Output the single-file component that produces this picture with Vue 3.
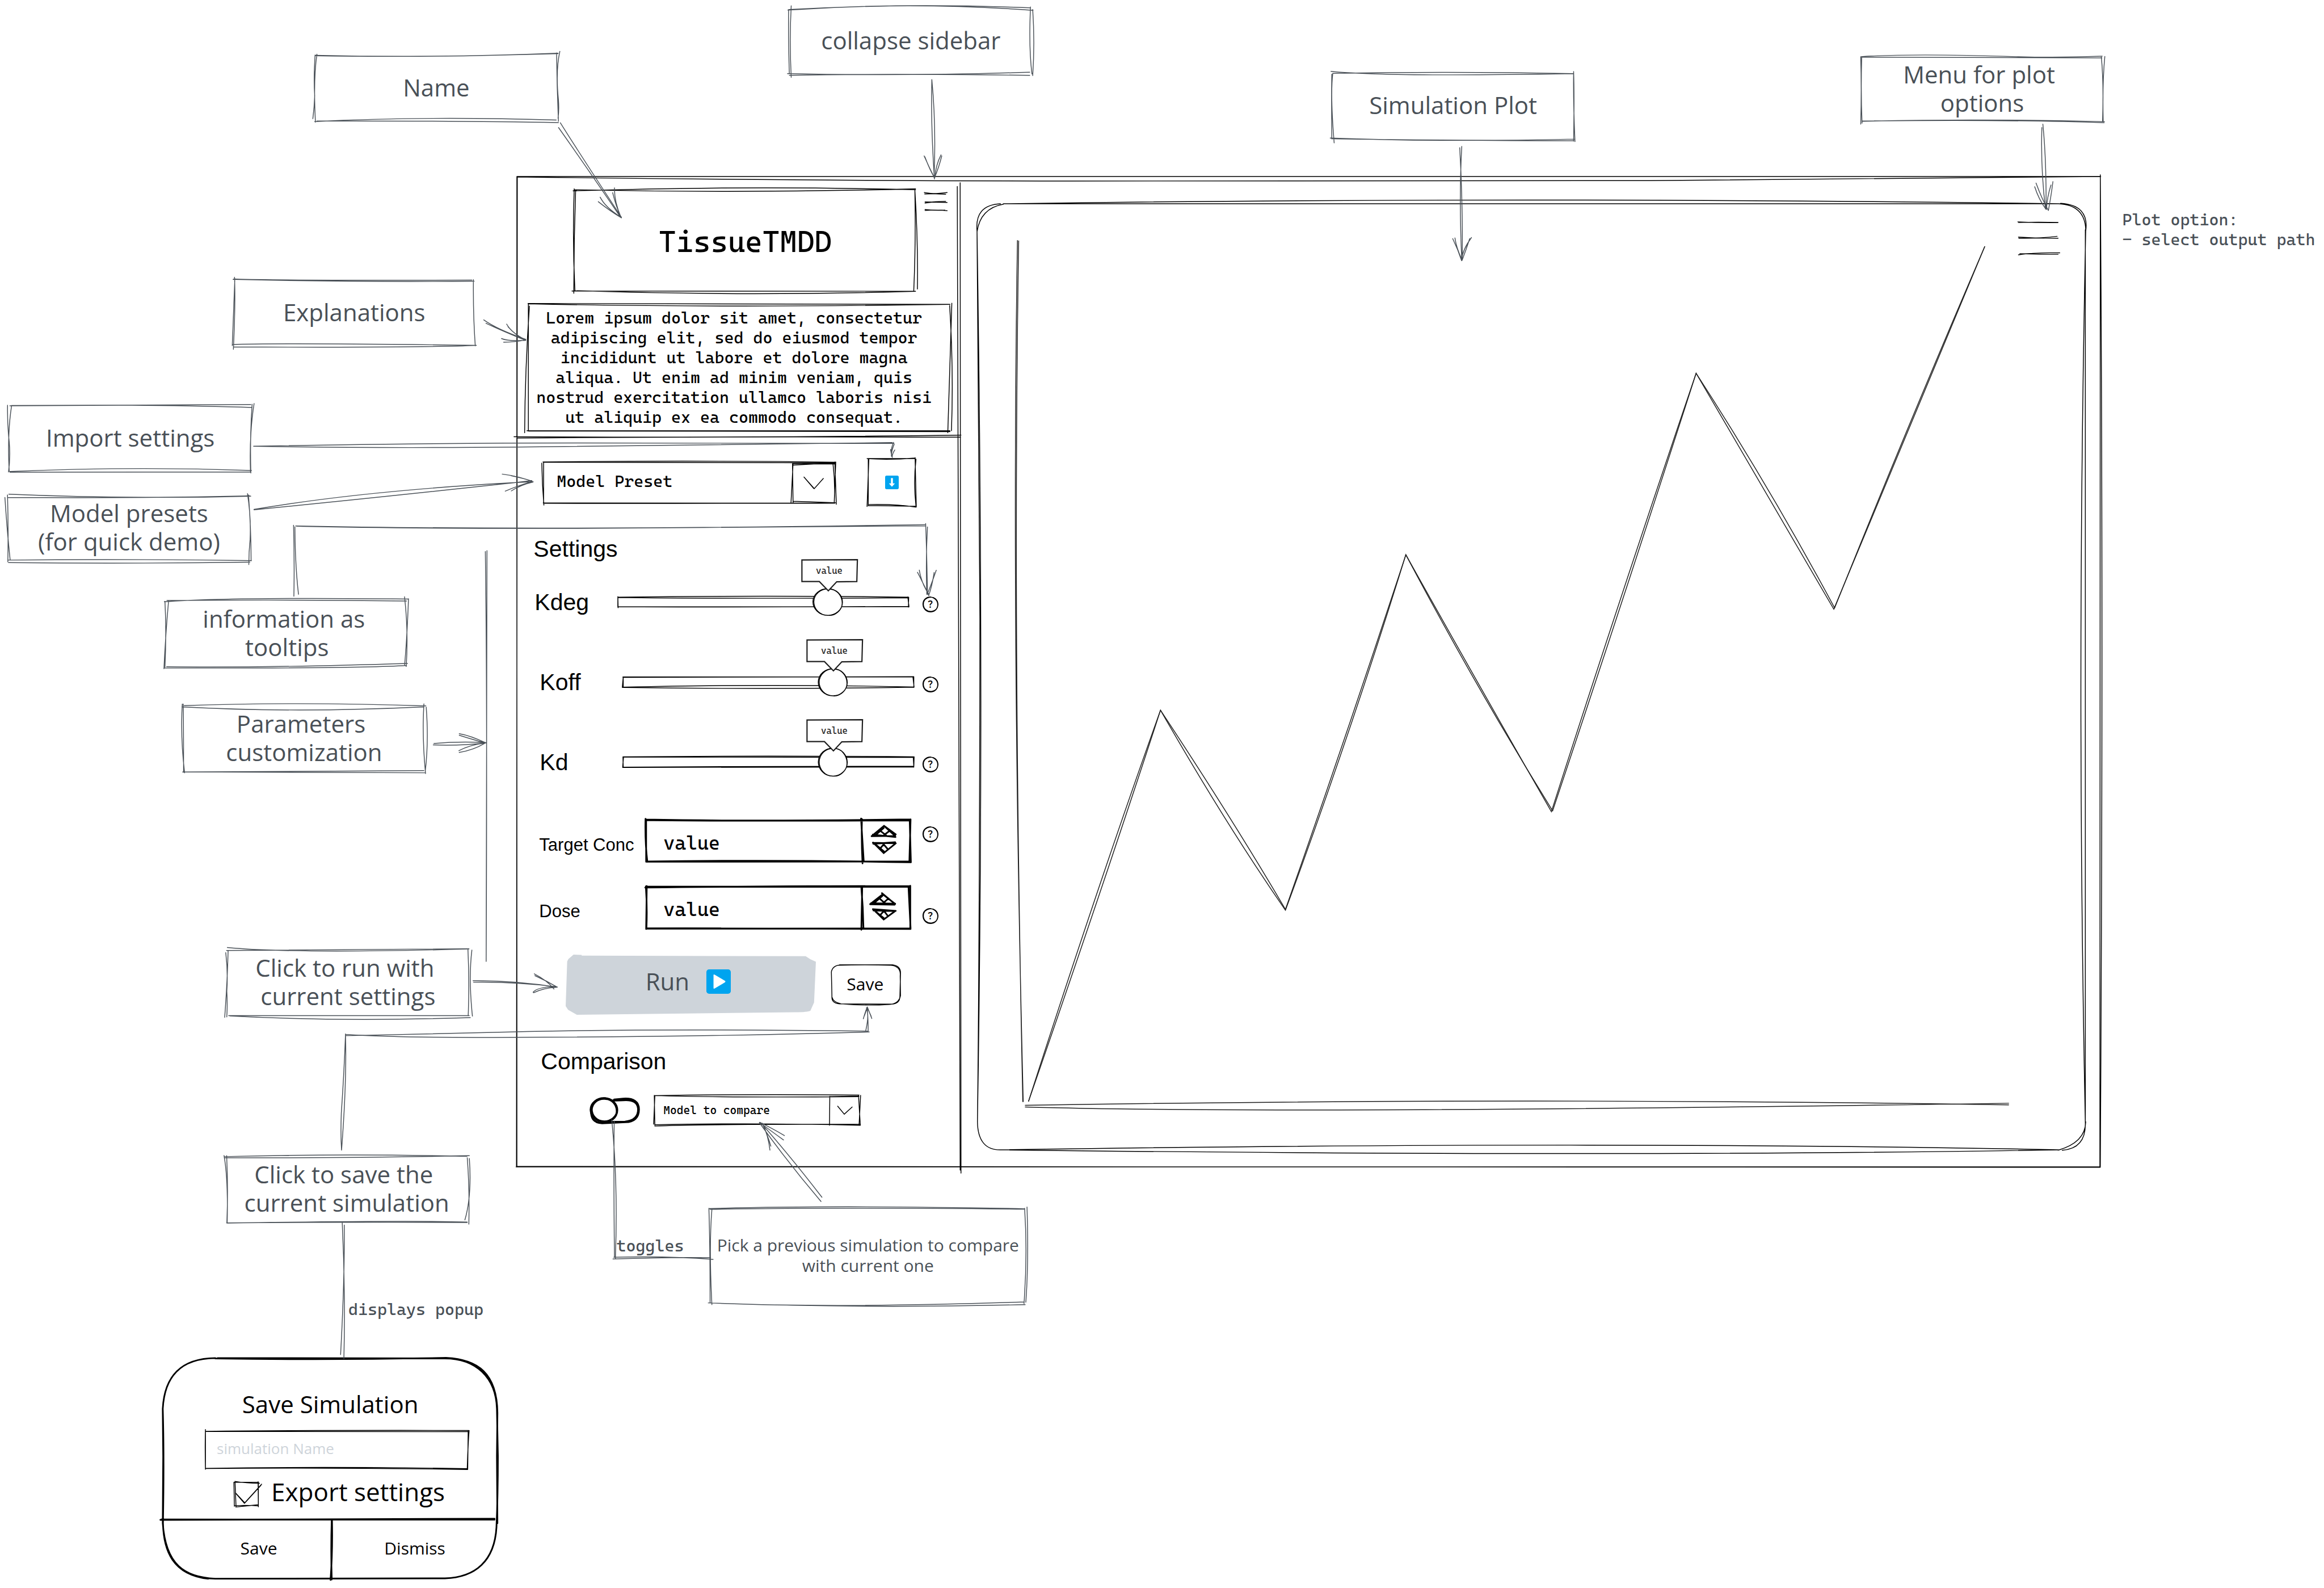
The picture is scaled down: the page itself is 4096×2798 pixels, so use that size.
<script setup>
import { h, ref } from 'vue'

// Every stroke lives on one 5636 x 3850 board. Strokes are noted down on local
// sheets of 1568 x 1568 units; sheet() maps a sheet onto its part of the board.
const BOARD = { w: 5636, h: 3850 }
const sheet = (x, y, w, h2) => (d) =>
  d.replace(/(-?[\d.]+) (-?[\d.]+)/g, (m, a, b) =>
    `${Math.round((x + (a * w) / 1568) * 10) / 10} ${Math.round((y + (b * h2) / 1568) * 10) / 10}`)

const north = sheet(0, 0, 1400, 1000)
const head = sheet(1200, 0, 1400, 1080)
const west = sheet(0, 950, 1250, 950)
const sliderSheet = sheet(1240, 1040, 1150, 850)
const form = sheet(1240, 1880, 1150, 1000)
const runSheet = sheet(350, 2240, 1000, 800)
const popupSheet = sheet(350, 3100, 900, 750)
const compareSheet = sheet(1400, 2600, 1150, 600)
const east = sheet(4400, 100, 1236, 800)
const plotSheet = sheet(2300, 400, 1700, 1400)
const topSheet = sheet(3150, 130, 750, 523)

const blob = (cx, cy, rx, ry) => {
  const ring = (x, y, a, b, s) =>
    `M${x - a} ${y}C${x - a} ${y - b * 0.6} ${x - a * 0.5} ${y - b - s} ${x + s} ${y - b}C${x + a * 0.6} ${y - b} ${x + a} ${y - b * 0.5} ${x + a} ${y + s}C${x + a} ${y + b * 0.6} ${x + a * 0.5} ${y + b + s} ${x} ${y + b}C${x - a * 0.6} ${y + b} ${x - a} ${y + b * 0.5} ${x - a} ${y - s}`
  return ring(cx, cy, rx, ry, 1) + ring(cx + 1, cy + 1, rx - 2, ry - 1, 4)
}

const Sketch = (props) =>
  h('svg', {
    class: 'sketch',
    viewBox: props.box.join(' '),
    preserveAspectRatio: 'none',
    'aria-hidden': 'true',
    fill: 'none',
    stroke: 'currentColor',
    'stroke-width': props.weight || 2,
    'stroke-linecap': 'round',
  }, [
    h('path', { d: props.d }),
    props.top ? h('path', { d: props.top, fill: '#fff' }) : null,
  ])
Sketch.props = ['box', 'd', 'top', 'weight']

const place = (b) => ({
  left: `${(b[0] / BOARD.w) * 100}%`,
  top: `${(b[1] / BOARD.h) * 100}%`,
  width: `${(b[2] / BOARD.w) * 100}%`,
  height: b[3] ? `${(b[3] / BOARD.h) * 100}%` : undefined,
})

const callouts = [
  { text: 'Name', box: [763, 134, 590, 161], d: north('M856 211Q1180 222 1515 203M857 213Q1150 220 1515 205M1511 202Q1512 330 1516 462M1520 196Q1508 270 1516 380Q1518 420 1515 450M854 463Q1150 442 1510 457M860 461Q1250 460 1516 467M860 207Q850 300 856 465M855 210Q851 300 854 365Q853 410 849 452') },
  { text: 'Explanations', box: [567, 679, 584, 161], d: north('M633 1063Q960 1074 1288 1070M635 1062Q800 1068 1282 1066M1286 1064Q1285 1200 1291 1316M631 1311Q750 1304 1294 1314M634 1320Q1150 1323 1294 1314M637 1055Q640 1150 634 1329M638 1060Q634 1200 631 1315') },
  { text: 'collapse sidebar', box: [1914, 19, 590, 162], d: head('M800 33Q1120 10 1453 27M796 35Q1130 5 1462 36M1455 24Q1450 170 1459 260M1461 33Q1467 150 1461 266M795 259Q1120 268 1453 254M800 265Q1050 258 1453 265M805 20Q800 140 805 272M798 33Q797 140 800 260') },
  { text: 'Simulation Plot', box: [3230, 177, 588, 160], d: topSheet('M173 142Q780 126 1392 144M164 127Q440 168 1392 144M1394 129Q1398 300 1394 635M1394 135Q1392 350 1401 638M160 612Q700 642 1400 620M166 618Q900 632 1396 632M168 148Q166 300 168 615M173 143Q160 300 180 647') },
  { text: 'Menu for plot \noptions', box: [4514, 138, 586, 158], d: east('M142 74Q300 58 620 74Q750 80 885 72M146 76Q500 77 884 80M882 73Q890 200 886 380M893 73Q885 200 888 382M147 381Q500 368 892 383M147 380Q600 372 891 388M142 74Q145 230 142 395M145 74Q142 240 146 390') },
  { text: 'Import settings', box: [22, 984, 588, 160], d: west('M30 56Q400 52 763 51M35 55Q500 50 767 63M767 50Q760 180 763 325M773 47Q758 170 762 320M30 319Q400 298 765 315M30 322L763 321M23 54Q22 130 28 200Q32 260 26 321M35 58Q22 170 28 318') },
  { text: 'Model presets\n(for quick demo)', box: [18, 1201, 590, 161], d: west('M27 409Q400 430 763 417M24 422Q400 426 760 416M753 407Q764 500 761 590Q757 640 757 691M756 412Q764 550 764 676M24 673Q380 668 765 675M26 683Q400 688 760 681M23 412Q26 540 24 680M15 422Q22 560 31 672') },
  { text: 'information as \ntooltips', box: [402, 1455, 588, 163], d: west('M500 841Q700 822 1243 830M508 836Q900 832 1237 838M1231 821Q1243 960 1236 1100M1243 829Q1238 1000 1231 1096M499 1106Q1100 1108 1237 1096M507 1101Q800 1106 1240 1088M502 839Q507 960 502 1103M513 838Q504 970 499 1109') },
  { text: 'Parameters \ncustomization', box: [444, 1712, 587, 160], d: west('M560 1256Q900 1240 1295 1257M553 1261Q900 1286 1289 1261M1289 1249Q1283 1380 1294 1528M1296 1262Q1304 1400 1293 1520M555 1522Q900 1520 1289 1516M560 1521Q900 1523 1293 1525M554 1250Q548 1380 561 1525M557 1250Q558 1380 558 1523') },
  { text: 'Click to run with \ncurrent settings', box: [550, 2302, 588, 162], d: runSheet('M315 112Q560 142 1234 119M312 126Q600 122 1234 118M1230 120Q1236 280 1231 433M1245 124Q1232 260 1247 438M320 436Q750 438 1235 436M325 437Q750 466 1239 445M309 136Q318 230 313 320Q316 380 313 442M318 128Q315 280 305 444') },
  { text: 'Click to save the \ncurrent simulation', box: [547, 2804, 588, 160], d: runSheet('M304 1105Q770 1090 1226 1104M303 1111Q770 1112 1235 1101M1227 1111Q1236 1250 1233 1426M1235 1114Q1245 1290 1218 1406M312 1420Q800 1416 1227 1418M313 1421Q1000 1408 1227 1416M312 1101Q318 1250 313 1420M302 1100Q318 1210 314 1420') },
  { text: 'Pick a previous simulation to compare\nwith current one', small: true, box: [1722, 2929, 766, 234], d: compareSheet('M438 862Q860 838 1480 863M440 866Q860 852 1480 865M1480 860Q1490 1150 1478 1464M1488 852Q1494 1200 1484 1455M434 1459Q850 1494 1478 1453M436 1459Q950 1496 1482 1470M446 866Q436 1100 446 1470M436 860Q440 1100 440 1458') },
]

const notes = [
  { text: 'Plot option:\n- select output path', box: [5147, 509, 489] },
  { text: 'toggles', box: [1495, 2997, 200] },
  { text: 'displays popup', box: [845, 3151, 360] },
]

const connectors = [
  head('M178 432Q230 540 344 765M173 449Q250 590 340 762M281 710Q310 740 344 767M286 694Q300 730 342 764M325 661Q324 710 343 766M320 678Q330 730 342 762'),
  head('M1187 280Q1184 440 1194 630M1187 280Q1199 440 1193 625M1166 549Q1180 590 1194 626M1168 552Q1182 600 1194 625M1212 545Q1198 580 1195 625M1214 549Q1206 590 1194 626'),
  north('M1314 1216Q1350 1252 1428 1290M1320 1229Q1370 1262 1428 1294M1376 1232Q1390 1266 1428 1292M1380 1242Q1400 1275 1428 1292M1362 1287Q1380 1298 1427 1294M1368 1301Q1400 1300 1428 1292'),
  'M615 1082Q1000 1074 1400 1074L2168 1075M615 1082Q900 1087 1250 1084L2164 1073',
  sliderSheet('M1264 60Q1252 95 1260 127M1266 68Q1256 100 1257 122M1254 92Q1256 110 1259 125M1268 94Q1260 110 1259 125'),
  'M616 1235Q880 1190 1250 1170L1293 1168M616 1236Q900 1208 1250 1170L1290 1165',
  sliderSheet('M-30 202Q30 212 72 237M0 209Q40 220 68 233M0 277Q30 250 72 237M-20 278Q20 255 68 235'),
  west('M894 818Q896 680 893 534M908 810Q898 700 897 540'),
  'M719 1276Q1000 1282 1400 1281L2245 1275M717 1275Q1300 1287 2243 1272',
  sliderSheet('M1370 423Q1374 560 1376 740M1376 438Q1370 580 1374 740M1343 641Q1362 690 1381 745M1349 631Q1356 690 1380 738M1405 632Q1390 690 1376 738M1398 642Q1392 700 1380 745'),
  west('M1318 1413Q1400 1417 1478 1405M1320 1407Q1400 1398 1478 1404M1397 1368Q1430 1375 1478 1405M1397 1374Q1440 1392 1476 1405M1396 1436Q1430 1412 1478 1405M1397 1443Q1440 1434 1474 1407'),
  'M1177 1337Q1182 1700 1179 2331M1181 1335Q1180 1900 1179 2328',
  runSheet('M1250 270Q1400 268 1568 300M1252 277Q1400 274 1566 298'),
  form('M76 754Q120 780 141 812M78 761Q115 780 152 805M72 824Q90 802 152 804M74 826Q105 808 150 805'),
  runSheet('M765 523Q760 700 749 900Q746 1000 750 1075M765 530Q770 750 750 1075'),
  'M838 2511Q1000 2508 1240 2502Q1600 2493 2104 2500M838 2508Q1000 2517 1240 2515Q1700 2514 2108 2502',
  form('M1180 972Q1180 930 1177 880M1172 970Q1184 910 1174 884M1164 925Q1170 900 1177 880M1167 915Q1172 900 1177 882M1192 924Q1186 905 1177 880M1190 916Q1184 900 1177 882'),
  'M830 2965Q838 3130 834 3294M835 2970Q836 3100 826 3284',
  compareSheet('M114 300Q135 700 126 1180M122 308Q120 700 123 1172M118 1182Q300 1170 441 1174M121 1171Q300 1162 449 1185'),
  compareSheet('M806 818Q700 580 602 318M809 791Q700 520 606 318M637 492Q632 400 612 322M640 467Q630 400 612 325M685 400Q640 350 603 316M682 428Q640 370 605 320'),
  'M3545 355Q3538 480 3545 632M3540 358Q3548 500 3546 630',
  plotSheet('M1128 200Q1140 230 1148 260M1133 198Q1136 225 1149 258M1170 197Q1150 230 1148 258M1166 200Q1158 230 1149 259'),
  east('M700 410Q696 600 711 797M703 394Q714 560 713 797M682 674Q700 750 720 804M678 691Q690 750 712 797M734 667Q728 740 720 804M728 683Q716 740 714 800'),
].join('')

const app = {
  box: [1254, 428, 3840, 0],
  frame: [1254, 428, 3840, 2401],
  d: 'M1254 428L5095 428M1254 429Q1900 438 2600 439Q3200 441 4000 438Q4600 434 5094 428M1254 428L1254 2829M1255 428L1253 2829M5094 428Q5102 1500 5094 2829M5094 424Q5098 1500 5093 2830M1252 2829L5094 2829M1254 2828L5094 2830M2322 452Q2326 1500 2329 2837M2329 443Q2331 1500 2331 2844M1247 1059Q1800 1062 2331 1055M1255 1062Q1700 1058 2330 1060',
}

const art = {
  title: { box: [1392, 459, 829, 246], d: head('M212 671Q680 652 1143 667M215 667Q680 680 1143 664M1141 665Q1144 850 1138 1023M1141 667Q1150 850 1148 1016M209 1023Q800 1024 1143 1024M215 1022Q680 1042 1143 1024M215 664Q210 850 217 1022M219 668Q214 850 214 1031') },
  collapse: { box: [2241, 466, 55, 44], d: head('M1166 677Q1185 682 1224 683M1167 682Q1200 681 1228 677M1168 714Q1195 708 1224 708M1168 710L1228 712M1168 737Q1195 741 1222 739M1168 740Q1200 737 1228 741') },
  intro: { box: [1281, 736, 1024, 309], d: head('M90 1068Q660 1067 1236 1071M92 1069Q600 1084 1236 1071M1241 1067Q1236 1300 1230 1522M1235 1075Q1246 1300 1240 1515M87 1515L1236 1515M92 1516L1236 1518M94 1077Q82 1300 81 1522M91 1068L91 1516') },
  preset: { box: [1317, 1117, 710, 101], weight: 2, d: sliderSheet('M105 142Q600 134 1073 143M106 143L1073 146M1073 142L1068 325M1070 142L1075 332M106 326L1070 328M106 328Q600 330 1072 325M101 147Q102 240 108 336M107 142L107 328M932 147L925 328M930 150L932 327M933 156Q1000 150 1070 149M930 149L1070 151M1064 152Q1072 240 1068 325M932 319L1068 325M968 210L1002 262L1032 216M970 213L1000 261') },
  download: { box: [2105, 1112, 115, 115], weight: 2, d: sliderSheet('M1176 133Q1250 140 1335 130M1180 133L1334 132M1334 129L1338 348M1337 135Q1328 240 1337 346M1180 342L1337 345M1180 337Q1270 334 1337 349M1182 133L1176 346M1180 133L1180 343') },
  bubble: { box: [1945, 1358, 136, 75], weight: 3, d: '', top: sliderSheet('M962 588L1147 587L1145 684L1078 685L1050 725L1020 684L962 684Z') },
  help: { box: [0, 0, 40, 40], d: 'M20 1C8 1 0 10 1 21C2 32 10 39 21 39C32 38 39 30 39 19C38 8 30 0 18 2M6 8C1 14 0 26 8 33C16 40 30 38 35 31C41 22 38 9 28 4C22 0 12 2 7 7' },
  save: { box: [2017, 2338, 166, 96], d: form('M1085 718L1260 718Q1286 722 1286 748L1284 838Q1284 866 1255 867L1085 866Q1058 864 1060 838L1058 745Q1062 720 1090 718M1080 720Q1170 716 1255 720Q1288 724 1285 760L1286 835Q1280 866 1250 868Q1170 874 1090 866Q1064 860 1060 840') },
  toggle: { box: [1432, 2659, 119, 63], weight: 5, d: form('M340 1231L370 1228C405 1225 422 1240 422 1268C422 1300 405 1316 378 1316L300 1320C270 1318 263 1300 263 1270C263 1245 280 1228 310 1226M330 1235L368 1233C404 1229 419 1244 420 1266C421 1296 404 1312 376 1315L300 1316'), top: form(blob(306, 1270, 44, 44)) },
  compare: { box: [1586, 2655, 500, 71], d: form('M472 1216Q800 1210 1150 1214M472 1216Q700 1224 1150 1220M1155 1215L1150 1326M1148 1216L1154 1328M474 1326Q800 1318 1154 1328M474 1331Q600 1324 1154 1324M472 1215L474 1328M474 1217L470 1324M1053 1219L1052 1328M1052 1220L1148 1218M1079 1256L1101 1286L1127 1259') },
  plotFrame: { box: [2368, 494, 2688, 2294], d: 'M2368 560Q2374 1400 2375 1500Q2374 2300 2369 2720M2368 560Q2386 1700 2369 2720M2432 494L4991 494M2432 494Q3700 476 4991 494M5057 557Q5034 1650 5056 2722M5056 557L5056 2722M2427 2788Q3900 2765 4994 2788M2427 2788Q3900 2806 4994 2788M2368 560Q2362 497 2425 494M2368 562Q2376 505 2432 495M4991 494Q5055 497 5057 557M4996 493Q5066 497 5057 560M5056 2722Q5058 2785 5000 2789M5057 2720Q5056 2770 4990 2789M2369 2720Q2370 2790 2427 2788' },
  plotMenu: { box: [4893, 538, 101, 80], d: east('M626 858Q690 863 748 862M628 861Q690 858 749 861M628 931Q690 938 749 936M629 936Q690 938 746 927M628 1015Q680 1003 754 1006M632 1010Q690 1012 749 1013') },
  popup: { box: [395, 3293, 812, 535], weight: 4, d: popupSheet('M310 403L1270 405C1400 405 1486 500 1490 660L1494 900Q1494 1100 1488 1260C1480 1430 1400 1515 1270 1519L300 1521C170 1515 90 1450 78 1240L80 900L78 660C85 500 150 405 300 403M300 405Q780 414 1275 402C1410 410 1490 480 1492 680L1490 900L1492 1240M78 660Q84 900 79 1240C82 1380 120 1500 270 1521M68 1223L1480 1217M72 1221L1480 1222M792 1223Q788 1380 792 1525M793 1223Q796 1380 787 1527') },
  nameField: { box: [498, 3468, 637, 91], d: popupSheet('M258 772Q750 766 1370 768M258 773L1368 774M1368 770L1366 965M1372 768Q1366 860 1364 960M258 960Q800 950 1366 962M258 961Q800 955 1366 966M258 763Q256 850 258 965M258 770L258 962') },
  check: { box: [568, 3592, 59, 59], d: popupSheet('M382 1026Q430 1036 486 1036M378 1030L482 1031M480 1028L481 1155M481 1030L481 1152M380 1149Q430 1145 481 1150M386 1156Q430 1150 481 1144M378 1030L380 1152M383 1030L387 1156M384 1084L422 1137L495 1040M386 1086L424 1135L492 1046') },
}

const sliders = ref([
  { name: 'Kdeg', value: 72, box: [1499, 1424, 706, 72], d: sliderSheet('M353 752Q850 744 1315 752M353 754Q700 760 1315 755M353 796L1315 795M353 795Q700 798 1313 794M353 750L354 800M353 752L353 797M1312 751L1316 796M1315 752L1314 797'), top: sliderSheet(blob(1047, 774, 49, 60)) },
  { name: 'Koff', value: 72, indent: true, box: [1513, 1618, 706, 72], d: sliderSheet('M372 1109L1334 1109M372 1111Q850 1107 1334 1108M372 1155Q850 1140 1334 1154M372 1156Q850 1166 1334 1155M373 1109L370 1156M373 1110L373 1155M1331 1109L1335 1155M1334 1109L1334 1156'), top: sliderSheet(blob(1066, 1133, 48, 61)) },
  { name: 'Kd', value: 72, indent: true, box: [1510, 1812, 706, 72], d: sliderSheet('M368 1466Q850 1460 1330 1466M368 1467L1330 1469M368 1513Q850 1508 1330 1509M368 1514L1330 1512M370 1466L367 1514M368 1467L369 1513M1328 1466L1330 1512M1331 1466L1330 1513'), top: sliderSheet(blob(1062, 1490, 48, 63)) },
])

const fields = ref([
  { name: 'Target Conc', value: 'value', side: 'high', box: [1566, 1987, 643, 103],
    d: form('M445 168Q800 176 1321 167M446 170Q700 174 1321 171M1321 167L1317 328M1318 168L1322 330M446 327Q900 320 1321 330M447 328L1321 327M444 165Q442 250 450 328M446 167L446 328M1157 164L1166 328M1160 166Q1158 250 1162 334M1192 231L1233 192L1270 230M1196 225L1271 234M1194 231L1268 230M1236 194L1272 224M1206 226L1232 200M1218 208L1240 228M1234 226L1250 212M1196 256L1272 258M1198 260L1270 254M1197 255L1232 295L1272 258M1204 261L1234 290M1232 262L1220 278M1232 262L1244 278') },
  { name: 'Dose', value: 'value', side: 'low', box: [1566, 2147, 643, 103],
    d: form('M443 425Q800 420 1320 419M445 421L1319 422M1320 418L1320 580M1314 420L1321 580M446 579L1321 582M446 581L1320 580M448 419L446 582M445 420Q450 500 447 580M1158 423Q1164 500 1165 578M1161 423L1158 585M1187 488L1229 450L1270 487M1190 484L1270 486M1188 488L1268 490M1226 446L1264 482M1202 482L1228 456M1216 464L1236 484M1232 482L1248 466M1196 507L1272 513M1198 512L1270 514M1198 508L1232 546L1270 514M1204 514L1234 542M1232 514L1220 530M1232 512L1244 530') },
])

const compareOn = ref(false)
const exportSettings = ref(true)
const simulationName = ref('')
</script>

<template>
  <main class="board">
    <article class="app" :style="place(app.box)">
      <Sketch :box="app.frame" :d="app.d" />
      <aside class="sidebar">
        <header class="brand">
          <h1 class="title"><Sketch v-bind="art.title" />TissueTMDD</h1>
          <button class="collapse" type="button" aria-label="Collapse sidebar"><Sketch v-bind="art.collapse" /></button>
        </header>
        <p class="intro">
          <Sketch v-bind="art.intro" />
          Lorem ipsum dolor sit amet, consectetur adipiscing elit, sed do eiusmod tempor incididunt ut labore et dolore magna aliqua. Ut enim ad minim veniam, quis nostrud exercitation ullamco laboris nisi ut aliquip ex ea commodo consequat.
        </p>

        <div class="preset-row">
          <div class="picker preset">
            <select aria-label="Model preset"><option>Model Preset</option></select>
            <Sketch v-bind="art.preset" />
          </div>
          <button class="download" type="button" aria-label="Import settings">
            <Sketch v-bind="art.download" />
            <svg class="icon-small" viewBox="0 0 36 36" aria-hidden="true">
              <rect width="36" height="36" rx="4" fill="#00a4ef" />
              <path d="M16 7h4v14h5L18 29l-7-8h5z" fill="#fff" stroke="#fff" stroke-linejoin="round" />
            </svg>
          </button>
        </div>

        <h2 class="section settings-title">Settings</h2>
        <div class="sliders">
          <div v-for="s in sliders" :key="s.name" class="slider-row" :class="{ indent: s.indent }">
            <label :for="s.name">{{ s.name }}</label>
            <div class="slider">
              <input :id="s.name" v-model="s.value" type="range" min="0" max="100" />
              <Sketch :box="s.box" :d="s.d" :top="s.top" />
              <output class="bubble" :for="s.name"><Sketch v-bind="art.bubble" /><span>value</span></output>
            </div>
            <button class="help" type="button" :aria-label="`About ${s.name}`"><Sketch v-bind="art.help" />?</button>
          </div>
        </div>

        <div class="fields">
          <div v-for="f in fields" :key="f.name" class="field-row">
            <label :for="f.name">{{ f.name }}</label>
            <div class="field">
              <input :id="f.name" v-model="f.value" type="text" />
              <div class="stepper">
                <button type="button" :aria-label="`Increase ${f.name}`"></button>
                <button type="button" :aria-label="`Decrease ${f.name}`"></button>
              </div>
              <Sketch :box="f.box" :d="f.d" :weight="4" />
            </div>
            <button class="help" :class="f.side" type="button" :aria-label="`About ${f.name}`"><Sketch v-bind="art.help" />?</button>
          </div>
        </div>

        <div class="actions">
          <button class="run" type="button">
            <svg class="run-fill" viewBox="179 679 829 230" preserveAspectRatio="none" aria-hidden="true">
              <path d="M205 679L232 680L232 683L974 685L990 697L1008 706L1002 862L990 893Q980 899 940 899L216 909L187 890L179 876L184 705L188 696Z" fill="#ced4da" />
            </svg>
            <span>Run</span>
            <svg class="icon" viewBox="0 0 36 36" aria-hidden="true">
              <rect width="36" height="36" rx="4" fill="#00a4ef" />
              <path d="M10.500 8.500v19q0 1.500 1.500.8L27.500 19q1-1 0-2L12 7.700q-1.500-.7-1.500.8z" fill="#fff" />
            </svg>
          </button>
          <button class="save" type="button"><Sketch v-bind="art.save" />Save</button>
        </div>

        <h2 class="section compare-title">Comparison</h2>
        <div class="compare-row">
          <label class="toggle">
            <input v-model="compareOn" type="checkbox" role="switch" aria-label="Compare with a previous simulation" />
            <Sketch v-bind="art.toggle" />
          </label>
          <div class="picker compare">
            <select aria-label="Model to compare"><option>Model to compare</option></select>
            <Sketch v-bind="art.compare" />
          </div>
        </div>
      </aside>

      <section class="plot" aria-label="Simulation plot">
        <div class="plot-frame">
          <Sketch v-bind="art.plotFrame" />
          <svg class="chart" viewBox="2368 494 2688 2294" fill="none" stroke="#1e1e1e" stroke-width="2" stroke-linecap="round" aria-hidden="true">
            <path d="M2466 583Q2451 1500 2480 2671M2469 584Q2454 1500 2479 2671" />
            <path d="M2485 2680Q3700 2660 4870 2679M2485 2684Q3100 2702 4870 2675" />
            <path d="M2493 2670Q2680 2130 2813 1722Q2990 1990 3116 2205Q3262 1790 3408 1345Q3590 1670 3761 1968Q3930 1440 4112 905L4446 1477L4812 598" />
            <path d="M2493 2670Q2670 2120 2813 1722Q2970 1996 3116 2207Q3270 1790 3408 1345Q3580 1670 3764 1966Q3940 1440 4112 905Q4290 1180 4448 1474Q4630 1020 4812 598" />
          </svg>
          <button class="plot-menu" type="button" aria-label="Plot options"><Sketch v-bind="art.plotMenu" /></button>
        </div>
      </section>
    </article>

    <div v-for="c in callouts" :key="c.text" class="callout" :class="{ small: c.small }" :style="place(c.box)">
      <Sketch :box="c.box" :d="c.d" />{{ c.text }}
    </div>
    <p v-for="n in notes" :key="n.text" class="note" :style="place(n.box)">{{ n.text }}</p>

    <form class="popup" :style="place([395, 3293, 812, 0])" @submit.prevent>
      <Sketch v-bind="art.popup" />
      <h2>Save Simulation</h2>
      <div class="name-field">
        <input v-model="simulationName" type="text" placeholder="simulation Name" aria-label="Simulation name" />
        <Sketch v-bind="art.nameField" />
      </div>
      <label class="export">
        <span class="tick"><input v-model="exportSettings" type="checkbox" /><Sketch v-bind="art.check" /></span>
        <span class="export-text">Export settings</span>
      </label>
      <div class="popup-actions">
        <button class="confirm" type="submit">Save</button>
        <button type="button">Dismiss</button>
      </div>
    </form>

    <svg class="connectors" :viewBox="`0 0 ${BOARD.w} ${BOARD.h}`" preserveAspectRatio="none" aria-hidden="true">
      <path :d="connectors" />
    </svg>
  </main>
</template>

<style>
body {
  background: #fff;
}
</style>

<style scoped>
.board {
  --hand: "Virgil", "Open Sans", sans-serif;
  --mono: "Cascadia Code", "DejaVu Sans Mono", monospace;
  --plain: "Liberation Sans", Arial, sans-serif;
  --slate: #495057;
  position: relative;
  width: 100%;
  aspect-ratio: 5636 / 3850;
  overflow: hidden;
  color: #000;
  font-family: var(--plain);
}
h1, h2, p { margin: 0; font-weight: 400; }
button, input, select {
  margin: 0;
  padding: 0;
  border: 0;
  border-radius: 0;
  outline: 0;
  background: transparent;
  color: inherit;
  font: inherit;
  appearance: none;
}
button, select { cursor: pointer; }
.sketch {
  position: absolute;
  inset: 0;
  width: 100%;
  height: 100%;
  overflow: visible;
  pointer-events: none;
}
.connectors {
  position: absolute;
  inset: 0;
  width: 100%;
  height: 100%;
  fill: none;
  stroke: var(--slate);
  stroke-width: 2;
  stroke-linecap: round;
  pointer-events: none;
}

/* annotations */
.callout {
  position: absolute;
  box-sizing: border-box;
  display: flex;
  align-items: center;
  justify-content: center;
  padding-bottom: 4px;
  color: var(--slate);
  font: 42px/50px var(--hand);
  text-align: center;
  white-space: pre;
}
.callout.small { font-size: 30px; line-height: 36px; }
.note {
  position: absolute;
  color: var(--slate);
  font: 370 29px/35px var(--mono);
  white-space: pre;
}

/* application window */
.app {
  position: absolute;
  display: grid;
  grid-template-columns: 28% 72%;
}
.sidebar { padding: 23px 0 74px; }
.brand {
  display: flex;
  align-items: flex-start;
  gap: 15px;
  padding-left: 101px;
}
.title {
  position: relative;
  box-sizing: border-box;
  display: flex;
  align-items: center;
  justify-content: center;
  width: 602px;
  height: 179px;
  padding-top: 4px;
  font: 370 52px/60px var(--mono);
}
.collapse {
  position: relative;
  width: 40px;
  height: 32px;
  margin-top: 5px;
}
.intro {
  position: relative;
  margin: 22px 17px 0 20px;
  padding: 8px 20px 7px 0;
  font: 370 29px/35px var(--mono);
  text-align: center;
}
.preset-row {
  display: flex;
  align-items: center;
  gap: 57px;
  margin: 48px 0 0 46px;
}
.picker { position: relative; }
.picker select {
  box-sizing: border-box;
  width: 100%;
  height: 100%;
}
.preset { width: 516px; height: 73px; font: 370 29px/35px var(--mono); }
.preset select { padding: 0 0 3px 24px; }
.download {
  position: relative;
  display: flex;
  align-items: center;
  justify-content: center;
  width: 84px;
  height: 84px;
}
.icon-small { width: 24px; height: 24px; }
.section { font-size: 41px; line-height: 46px; }
.settings-title { margin: 52px 0 0 29px; }
.sliders {
  display: grid;
  gap: 81px;
  margin-top: 41px;
}
.slider-row {
  display: flex;
  align-items: center;
  height: 60px;
  padding: 0 39px 0 31px;
}
.slider-row.indent { padding-left: 40px; }
.slider-row label { width: 147px; font-size: 41px; line-height: 46px; }
.slider {
  position: relative;
  width: 513px;
  height: 52px;
}
.slider input { width: 100%; height: 100%; }
.slider input::-webkit-slider-runnable-track { background: transparent; }
.slider input::-webkit-slider-thumb { width: 52px; height: 52px; appearance: none; }
.bubble {
  position: absolute;
  left: 63%;
  bottom: 46px;
  width: 98px;
  height: 55px;
  color: #1e1e1e;
  font: 370 16px/40px var(--mono);
  text-align: center;
}
.bubble span { position: relative; }
.help {
  position: relative;
  flex: none;
  width: 28px;
  height: 28px;
  margin: 16px 0 8px auto;
  font: 370 18px/28px var(--mono);
  text-align: center;
}
.help.high { align-self: flex-start; margin-top: 12px; }
.help.low { align-self: flex-end; }
.fields {
  display: grid;
  gap: 42px;
  margin-top: 71px;
}
.field-row {
  display: flex;
  align-items: center;
  height: 75px;
  padding: 0 39px;
}
.field-row label { width: 188px; padding-top: 14px; font-size: 31px; line-height: 36px; }
.field {
  position: relative;
  display: flex;
  width: 467px;
  height: 75px;
}
.field input {
  flex: 1;
  min-width: 0;
  padding: 6px 0 0 31px;
  font: 370 34px/40px var(--mono);
}
.stepper {
  display: grid;
  width: 83px;
}
.actions {
  display: flex;
  align-items: center;
  gap: 28px;
  margin: 46px 0 0 86px;
}
.run {
  position: relative;
  display: flex;
  align-items: center;
  justify-content: center;
  gap: 30px;
  width: 441px;
  height: 106px;
  padding: 0 10px 12px 0;
  box-sizing: border-box;
  color: var(--slate);
  font: 42px/50px var(--hand);
}
.run-fill {
  position: absolute;
  inset: 0;
  width: 100%;
  height: 100%;
}
.run span, .icon { position: relative; }
.icon { width: 43px; height: 43px; }
.save {
  position: relative;
  width: 121px;
  height: 70px;
  padding: 0 4px 2px 0;
  font: 30px/40px var(--hand);
}
.compare-title { margin: 59px 0 0 42px; }
.compare-row {
  display: flex;
  align-items: center;
  gap: 26px;
  margin: 37px 0 0 130px;
}
.toggle {
  position: relative;
  width: 86px;
  height: 46px;
}
.toggle input { display: block; width: 100%; height: 100%; cursor: pointer; }
.compare { width: 363px; height: 52px; font: 370 20px/26px var(--mono); }
.compare select { padding-left: 16px; }

/* plot area */
.plot { padding: 48px 27px 30px 29px; }
.plot-frame { position: relative; }
.chart { display: block; width: 100%; }
.plot-menu {
  position: absolute;
  top: 32px;
  right: 45px;
  width: 74px;
  height: 58px;
}

/* save popup */
.popup {
  position: absolute;
  font-family: var(--hand);
}
.popup h2 {
  padding: 56px 0 22px;
  font-size: 42px;
  line-height: 50px;
  text-align: center;
}
.name-field {
  position: relative;
  width: 463px;
  height: 66px;
  margin-left: 75px;
}
.name-field input {
  box-sizing: border-box;
  width: 100%;
  height: 100%;
  padding: 0 20px 4px;
  font-size: 26px;
}
.name-field input::placeholder { color: #ced4da; opacity: 1; }
.export {
  display: flex;
  align-items: center;
  gap: 22px;
  margin: 20px 0 0 126px;
  font-size: 44px;
  line-height: 50px;
}
.tick { position: relative; width: 43px; height: 43px; }
.tick input { display: block; width: 100%; height: 100%; }
.export-text { height: 50px; margin: -4px 0 4px; }
.popup-actions {
  display: grid;
  grid-template-columns: 298px 1fr;
  height: 105px;
  margin-top: 20px;
}
.popup-actions button { padding-bottom: 5px; font-size: 30px; }
.popup-actions .confirm { padding-left: 40px; }
</style>
